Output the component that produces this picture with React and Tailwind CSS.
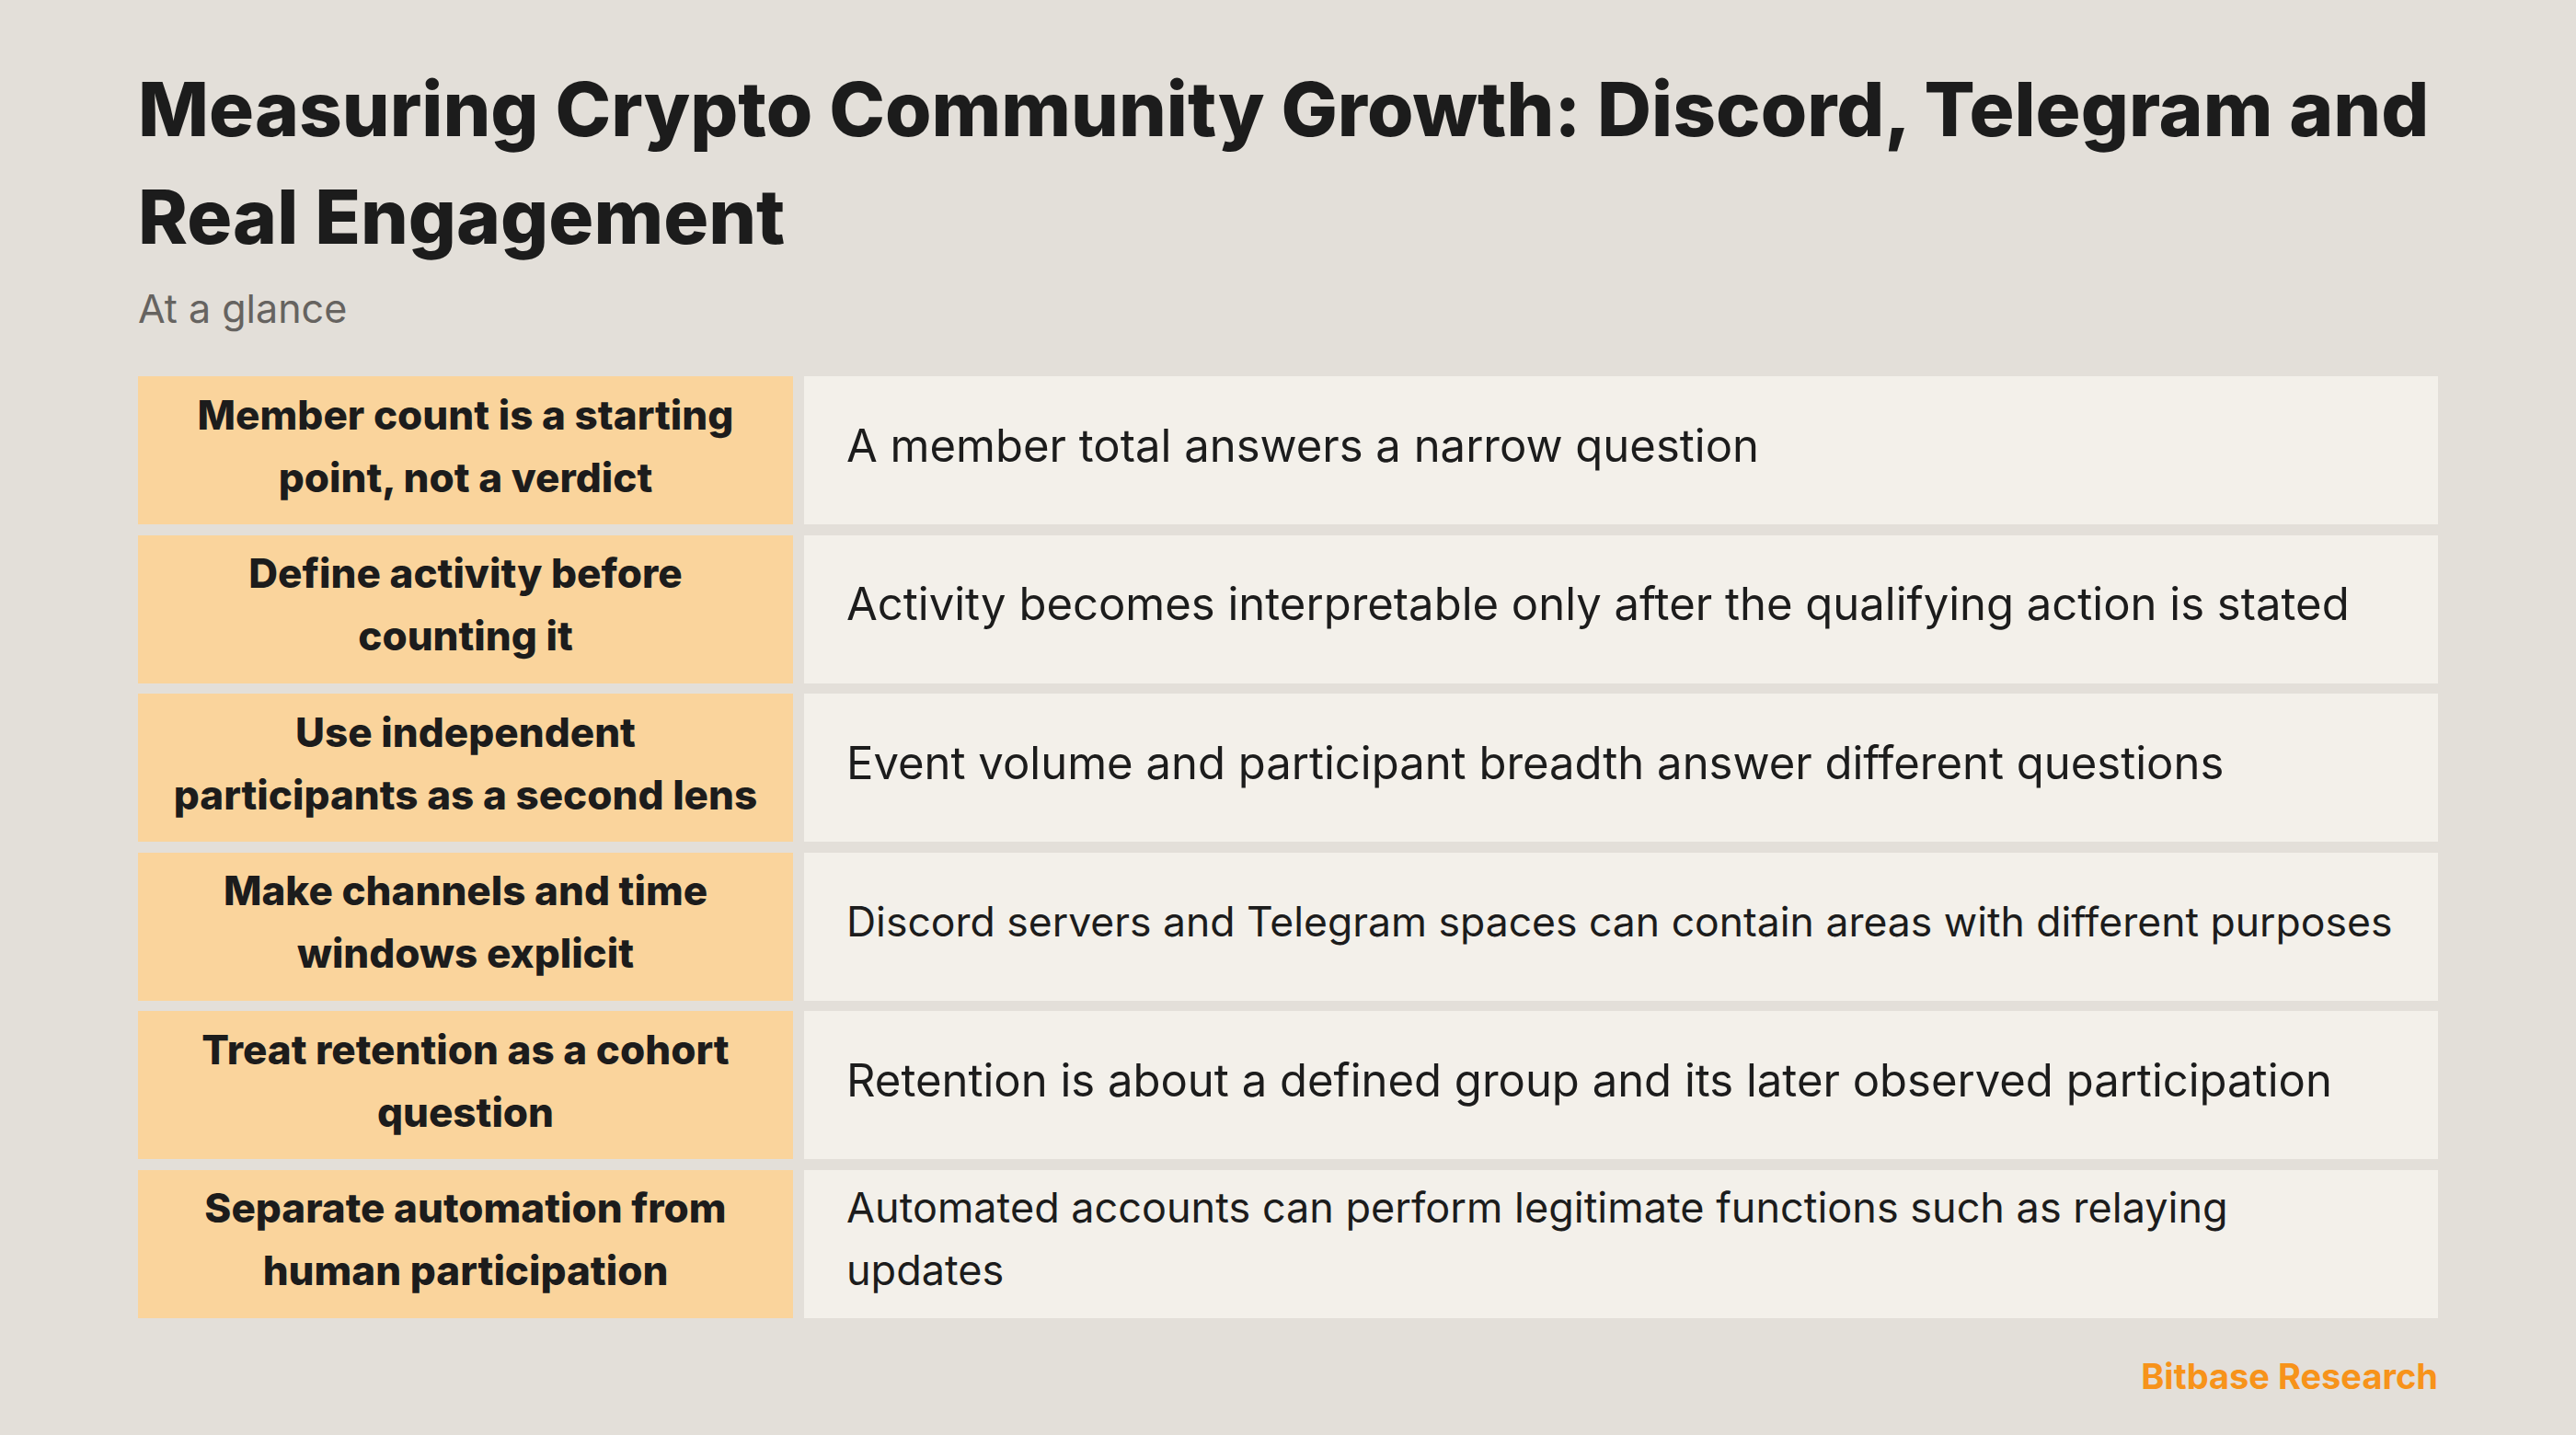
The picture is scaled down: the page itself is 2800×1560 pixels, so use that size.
import React from 'react';

const rows = [
  {
    key: ['Member count is a starting', 'point, not a verdict'],
    value: ['A member total answers a narrow question'],
    size: 'text-[49px] leading-[68px]',
  },
  {
    key: ['Define activity before', 'counting it'],
    value: ['Activity becomes interpretable only after the qualifying action is stated'],
    size: 'text-[49px] leading-[68px]',
  },
  {
    key: ['Use independent', 'participants as a second lens'],
    value: ['Event volume and participant breadth answer different questions'],
    size: 'text-[49px] leading-[68px]',
  },
  {
    key: ['Make channels and time', 'windows explicit'],
    value: ['Discord servers and Telegram spaces can contain areas with different purposes'],
    size: 'text-[44.5px] leading-[64px]',
  },
  {
    key: ['Treat retention as a cohort', 'question'],
    value: ['Retention is about a defined group and its later observed participation'],
    size: 'text-[49px] leading-[68px]',
  },
  {
    key: ['Separate automation from', 'human participation'],
    value: ['Automated accounts can perform legitimate functions such as relaying', 'updates'],
    size: 'text-[45px] leading-[68px]',
  },
];

export default function App() {
  return (
    <div
      className="w-[2800px] h-[1560px] bg-[#e3dfd9] px-[150px] pt-[60px] text-[#1c1c1c]"
      style={{ fontFamily: 'Inter, "Noto Sans", sans-serif' }}
    >
      {/* Header */}
      <h1 className="text-[81.7px] leading-[117px] font-extrabold">
        Measuring Crypto Community Growth: Discord, Telegram and
        <br />
        Real Engagement
      </h1>
      <p className="mt-[15px] text-[43px] leading-[52px] text-[#666360]">At a glance</p>

      {/* Summary table */}
      <div className="mt-[48px] flex flex-col gap-[11.5px]">
        {rows.map((row, i) => (
          <div key={i} className="flex gap-[12px] h-[161px]">
            <div className="w-[712px] shrink-0 bg-[#fad49c] flex items-center justify-center px-[16px] pb-[10px] text-center">
              <div className="text-[44px] leading-[68px] font-extrabold">
                {row.key.map((line, j) => (
                  <div key={j}>{line}</div>
                ))}
              </div>
            </div>
            <div className="flex-1 bg-[#f3f0ea] flex items-center pl-[46px] pr-[24px] pb-[10px]">
              <div className={row.size}>
                {row.value.map((line, j) => (
                  <div key={j}>{line}</div>
                ))}
              </div>
            </div>
          </div>
        ))}
      </div>

      {/* Footer */}
      <div className="mt-[38px] flex justify-end">
        <span className="text-[38px] leading-[50px] font-bold text-[#f7931a]">Bitbase Research</span>
      </div>
    </div>
  );
}
